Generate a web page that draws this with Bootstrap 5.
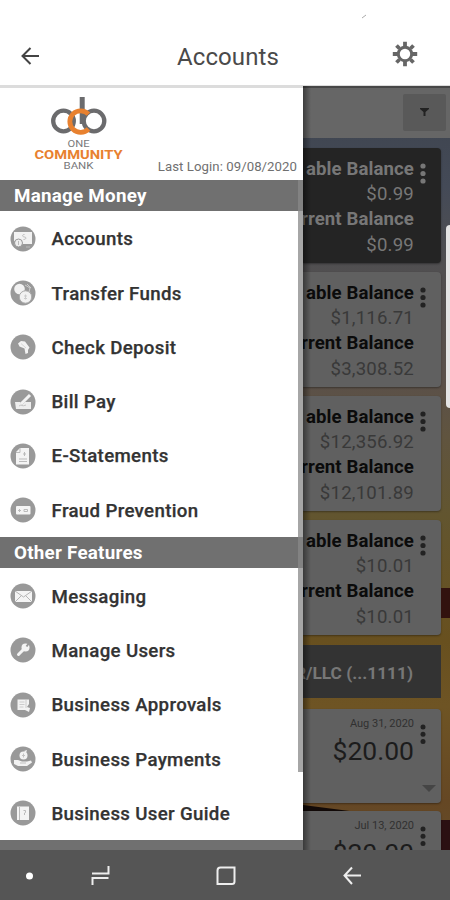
<!DOCTYPE html>
<html lang="en">
<head>
<meta charset="utf-8">
<meta name="viewport" content="width=device-width, initial-scale=1">
<title>Accounts</title>
<link rel="stylesheet" href="https://cdn.jsdelivr.net/npm/bootstrap@5.3.0/dist/css/bootstrap.min.css">
<style>
body{font-family:Roboto,sans-serif;width:450px;height:900px;background:#fff;color:#333}
svg{display:block;flex:none}
.topbar{height:88px;padding:27px 32px 0 20px;border-bottom:3px solid #dcdcdc;position:relative}
.topbar h1{font-size:24px;font-weight:400;letter-spacing:.1px;color:#4a4a4a;line-height:61px;margin-left:23px}
.speck{position:absolute;left:361px;top:13px}
.stage{height:762px}
.drawer{width:303px;background:#fff;position:relative;overflow:hidden}
.brandrow{height:92px;padding:8px 6px 0 33px}
.login{font-size:13.2px;letter-spacing:.06px;color:#707070;line-height:16px;padding-top:63px;white-space:nowrap}
.section-title{height:31px;background:#707070;color:#fff;font-weight:700;font-size:18.8px;line-height:32px;padding-left:14px;letter-spacing:.25px}
.menu-group{padding-top:.6px}
.menu-row{height:54.3px;padding-left:10px;gap:15.5px;color:#333;font-weight:500;font-size:18.7px;letter-spacing:.32px;line-height:24px}
.menu-row span{padding-top:1px;-webkit-text-stroke:.25px #333}
.scroll{position:absolute;right:0;top:92px;width:5px;height:592px;background:#888;opacity:.75}
.pane{width:147px;position:relative;overflow:hidden;margin-top:-2px;height:764px;color:#0b0b0b;
background:linear-gradient(#3d434d 0,#444a57 100px,#504f51 175px,#5a504a 290px,#60543f 350px,#62552f 430px,#68501f 555px,#6e5424 620px,#654724 715px,#654b29 764px)}
.shade{position:absolute;left:0;top:0;width:8px;height:100%;background:linear-gradient(90deg,rgba(0,0,0,.4),rgba(0,0,0,0));z-index:3}
.tools{height:52px;background:#666;border-top:2px solid #474747;padding:6px 4px}
.filter{width:43px;height:37px;background:#595959;border-radius:2px}
.cards{padding:10px 9px 0 0;gap:8.7px}
.acct{height:115.3px;background:#606060;border-radius:0 4px 4px 0;padding:9px 12px 0 0;gap:3px;flex:none;box-shadow:0 1px 2px rgba(0,0,0,.35)}
.acct.active{background:#242424;color:#777}
.lines{font-size:18.6px;line-height:25.2px;white-space:nowrap}
.lines>div{display:flex;justify-content:flex-end}
.lines .lbl{font-weight:700;letter-spacing:.1px}
.lines .amt{color:#393939;letter-spacing:.2px}
.active .amt{color:#777!important}
.kebab{margin:6px 3px 0 3px}
.holder{height:53px;background:#333;color:#777;font-weight:700;font-size:17.3px;line-height:56px;padding-right:28px;flex:none;white-space:nowrap;margin-top:1px}
.holder,.txn{display:flex;justify-content:flex-end}
.txn{height:94px;background:#606060;border-radius:0 4px 4px 0;padding:7px 12px 0 0;gap:3px;flex:none;position:relative;box-shadow:0 1px 2px rgba(0,0,0,.35)}
.holder+.txn{margin-top:2px}
.date{font-size:11px;line-height:16px;color:#303030;text-align:right}
.sum{font-size:26.5px;line-height:37px;color:#1c1c1c;text-align:right;letter-spacing:0}
.caret{position:absolute;right:5px;top:76px}
.wood{position:absolute;right:0;width:9px;background:#32120f}
.w1{top:502px;height:30px}.w2{top:734px;height:30px;background:#2b1012}
.wedge{position:absolute;left:0;top:718px}
.handle{position:absolute;right:0;top:139px;width:4px;height:183px;background:#e4e4e4;border-radius:4px 0 0 4px}
.navkeys{height:50px;background:#555}
</style>
<script src="https://cdn.jsdelivr.net/npm/bootstrap@5.3.0/dist/js/bootstrap.bundle.min.js"></script>
</head>
<body class="d-flex flex-column overflow-hidden">
<header class="topbar d-flex justify-content-between">
<svg width="21" height="58" viewBox="0 0 21 58" fill="none" stroke="#444" stroke-width="2"><path d="M19 29H3M10.500 21L2.500 29L10.500 37"/></svg>
<h1 class="mb-0">Accounts</h1>
<svg width="26" height="54" viewBox="-13 -27 26 54"><g stroke="#666" fill="none"><circle r="6.700" stroke-width="3"/><g stroke-width="3.800"><path d="M0-12.200V-7M0 12.200V7M-12.200 0H-7M12.200 0H7M-8.500-8.500L-5.500-5.500M8.500 8.500L5.500 5.500M-8.500 8.500L-5.500 5.500M8.500-8.500L5.500-5.500"/></g></g></svg>
<svg class="speck" width="7" height="6"><path d="M1 5L5 2" stroke="#aaa"/></svg>
</header>
<main class="stage d-flex">
<aside class="drawer">
<div class="brandrow d-flex justify-content-between">
<svg width="92" height="78" viewBox="33 96 92 78"><g fill="none" stroke="#6b6b6d" stroke-width="4.300"><circle cx="63.500" cy="121" r="10.300"/><circle cx="94" cy="121" r="10.300"/><path d="M82.200 97V124" stroke-width="5"/><path d="M88.500 114.200A10.800 10.800 0 1 0 88.500 129" stroke="#e8812f" stroke-width="4.800"/></g>
<g text-anchor="middle" font-family="Roboto,sans-serif"><text x="78.500" y="147.300" font-size="8.300" fill="#77777a" textLength="22" lengthAdjust="spacingAndGlyphs">ONE</text><text x="78.500" y="159.200" font-size="12.800" font-weight="700" fill="#e8812f" textLength="88" lengthAdjust="spacingAndGlyphs">COMMUNITY</text><text x="78.500" y="168.500" font-size="8.300" fill="#77777a" textLength="30" lengthAdjust="spacingAndGlyphs">BANK</text></g></svg>
<div class="login">Last Login: 09/08/2020</div>
</div>
<div class="section-title">Manage Money</div>
<nav class="menu-group">
<div class="menu-row d-flex align-items-center"><svg width="26" height="26" viewBox="0 0 26 26"><circle cx="13" cy="13" r="12.500" fill="#999"/><path d="M4 6h18v12H11v-3H4z" fill="#f2f2f2"/><path d="M14.500 8.500c-3 0-2 2.500 0 2.500s2 2.500-1 2.500" fill="none" stroke="#bbb"/><circle cx="8.500" cy="17" r="4" fill="#eee" stroke="#999"/><path d="M8.500 15v4M16 21h4" stroke="#bbb"/></svg><span>Accounts</span></div>
<div class="menu-row d-flex align-items-center"><svg width="26" height="26" viewBox="0 0 26 26"><circle cx="13" cy="13" r="12.500" fill="#999"/><circle cx="9.500" cy="9" r="5.300" fill="#f2f2f2"/><circle cx="15.500" cy="17" r="6.200" fill="#f2f2f2" stroke="#aaa"/><path d="M15.500 14.500v5M14 16h3M14 18.500h3" stroke="#ccc"/><path d="M15 5l5 3-1 4M17 4l4 4" fill="none" stroke="#ccc"/></svg><span>Transfer Funds</span></div>
<div class="menu-row d-flex align-items-center"><svg width="26" height="26" viewBox="0 0 26 26"><circle cx="13" cy="13" r="12.500" fill="#999"/><path d="M8 9.500L11 7l4 .5 4.500 6L18 16v3l-2.500 1-1-5.500-5-2z" fill="#f2f2f2"/><path d="M11 9.500l5 4.500" stroke="#d5d5d5"/></svg><span>Check Deposit</span></div>
<div class="menu-row d-flex align-items-center"><svg width="26" height="26" viewBox="0 0 26 26"><circle cx="13" cy="13" r="12.500" fill="#999"/><path d="M5 13h5l2 3 3-3h6v7H6z" fill="#eee"/><path d="M11 15L20 6" stroke="#f2f2f2" stroke-width="3"/><path d="M9 17c2-2 3 1 7-1" fill="none" stroke="#c4c4c4"/></svg><span>Bill Pay</span></div>
<div class="menu-row d-flex align-items-center"><svg width="26" height="26" viewBox="0 0 26 26"><circle cx="13" cy="13" r="12.500" fill="#999"/><path d="M10 5h9v16.500H6V9z" fill="#f4f4f4"/><path d="M6 9.500h4V5M13 11h3M14.500 9v4M9 16h8M9 18.500h8" fill="none" stroke="#bbb"/></svg><span>E-Statements</span></div>
<div class="menu-row d-flex align-items-center"><svg width="26" height="26" viewBox="0 0 26 26"><circle cx="13" cy="13" r="12.500" fill="#999"/><rect x="6" y="9" width="14.500" height="8.500" rx="1" fill="#f4f4f4"/><path d="M9.500 12v3M8 13.500h3M14 12.500h3.500v2H14z" stroke="#bbb" fill="none"/></svg><span>Fraud Prevention</span></div>
</nav>
<div class="section-title">Other Features</div>
<nav class="menu-group">
<div class="menu-row d-flex align-items-center"><svg width="26" height="26" viewBox="0 0 26 26"><circle cx="13" cy="13" r="12.500" fill="#999"/><rect x="5" y="8" width="17" height="11" rx="1" fill="#f4f4f4"/><path d="M5 8l8.500 6L22 8M5 19l6-6M22 19l-6-6" fill="none" stroke="#b5b5b5"/></svg><span>Messaging</span></div>
<div class="menu-row d-flex align-items-center"><svg width="26" height="26" viewBox="0 0 26 26"><circle cx="13" cy="13" r="12.500" fill="#999"/><path d="M8.500 17.500L14 12" stroke="#f4f4f4" stroke-width="3" stroke-linecap="round"/><circle cx="15.500" cy="10.500" r="4" fill="#f4f4f4"/><path d="M16.500 9.500l3-4" stroke="#999" stroke-width="2"/></svg><span>Manage Users</span></div>
<div class="menu-row d-flex align-items-center"><svg width="26" height="26" viewBox="0 0 26 26"><circle cx="13" cy="13" r="12.500" fill="#999"/><path d="M7.500 7.500H19V12l-2 3 3 1-1 4-4-2H7.500z" fill="#f2f2f2"/><path d="M9.500 10h5M9.500 12.500h5M9.500 15h4M16 8v8" stroke="#ccc"/></svg><span>Business Approvals</span></div>
<div class="menu-row d-flex align-items-center"><svg width="26" height="26" viewBox="0 0 26 26"><circle cx="13" cy="13" r="12.500" fill="#999"/><path d="M4 14h4l4 1.500h5l4-1 1 2-5 3.500H8l-4-2z" fill="#f2f2f2"/><circle cx="13.500" cy="9.500" r="4" fill="#f2f2f2"/><path d="M14 5l3-1-1 3" fill="#f2f2f2"/><path d="M13.500 7.500v4M12 9.500h3M10 17h6" stroke="#c2c2c2"/></svg><span>Business Payments</span></div>
<div class="menu-row d-flex align-items-center"><svg width="26" height="26" viewBox="0 0 26 26"><circle cx="13" cy="13" r="12.500" fill="#999"/><path d="M7 6.500H19v13.500H7z" fill="#f4f4f4"/><path d="M9.500 7v13M13.500 10.500h2v2l-1 .5v2" fill="none" stroke="#bbb"/></svg><span>Business User Guide</span></div>
</nav>
<div class="section-title"></div>
<div class="scroll"></div>
</aside>
<section class="pane">
<div class="wood w1"></div><div class="wood w2"></div>
<svg class="wedge" width="62" height="9"><path d="M0 1L62 9H0z" fill="#120a08"/></svg>
<div class="tools d-flex justify-content-end"><div class="filter d-flex align-items-center justify-content-center"><svg width="9" height="9"><path d="M0 0h9v1L5.500 4V8h-2V4L0 1z" fill="#222"/></svg></div></div>
<div class="cards d-flex flex-column">
<article class="acct active d-flex justify-content-end"><div class="lines"><div class="lbl">able Balance</div><div class="amt">$0.99</div><div class="lbl">rrent Balance</div><div class="amt">$0.99</div></div><svg class="kebab" width="6" height="22" fill="#777"><circle cx="3" cy="3" r="2.600"/><circle cx="3" cy="10.500" r="2.600"/><circle cx="3" cy="18" r="2.600"/></svg></article>
<article class="acct d-flex justify-content-end"><div class="lines"><div class="lbl">able Balance</div><div class="amt">$1,116.71</div><div class="lbl">rrent Balance</div><div class="amt">$3,308.52</div></div><svg class="kebab" width="6" height="22" fill="#222"><circle cx="3" cy="3" r="2.600"/><circle cx="3" cy="10.500" r="2.600"/><circle cx="3" cy="18" r="2.600"/></svg></article>
<article class="acct d-flex justify-content-end"><div class="lines"><div class="lbl">able Balance</div><div class="amt">$12,356.92</div><div class="lbl">rrent Balance</div><div class="amt">$12,101.89</div></div><svg class="kebab" width="6" height="22" fill="#222"><circle cx="3" cy="3" r="2.600"/><circle cx="3" cy="10.500" r="2.600"/><circle cx="3" cy="18" r="2.600"/></svg></article>
<article class="acct d-flex justify-content-end"><div class="lines"><div class="lbl">able Balance</div><div class="amt">$10.01</div><div class="lbl">rrent Balance</div><div class="amt">$10.01</div></div><svg class="kebab" width="6" height="22" fill="#222"><circle cx="3" cy="3" r="2.600"/><circle cx="3" cy="10.500" r="2.600"/><circle cx="3" cy="18" r="2.600"/></svg></article>
<div class="holder">R/LLC (...1111)</div>
<article class="txn"><div><div class="date">Aug 31, 2020</div><div class="sum">$20.00</div></div><svg class="kebab" width="6" height="22" fill="#222"><circle cx="3" cy="5" r="2.500"/><circle cx="3" cy="12.300" r="2.500"/><circle cx="3" cy="19.500" r="2.500"/></svg><svg class="caret" width="14" height="7"><path d="M0 0h14L7 7z" fill="#454545"/></svg></article>
<article class="txn"><div><div class="date">Jul 13, 2020</div><div class="sum">$20.00</div></div><svg class="kebab" width="6" height="22" fill="#222"><circle cx="3" cy="5" r="2.500"/><circle cx="3" cy="12.300" r="2.500"/><circle cx="3" cy="19.500" r="2.500"/></svg></article>
</div>
<div class="shade"></div>
<div class="handle"></div>
</section>
</main>
<footer class="navkeys">
<svg width="450" height="50" viewBox="0 850 450 50" fill="none" stroke="#eee" stroke-width="2"><circle cx="29.500" cy="876" r="3.500" fill="#fff" stroke="none"/><path d="M92 873.500H108.500V866M108.500 878H92.500V885"/><path d="M222 867.500H234.500V880M229 884H217.500V870.500Q217.500 867.500 220.500 867.500H223M234.500 870V881.500Q234.500 884 232 884H221"/><path d="M361 875.500H345M352 867.500L344.500 875.500L352 884"/></svg>
</footer>
</body>
</html>
